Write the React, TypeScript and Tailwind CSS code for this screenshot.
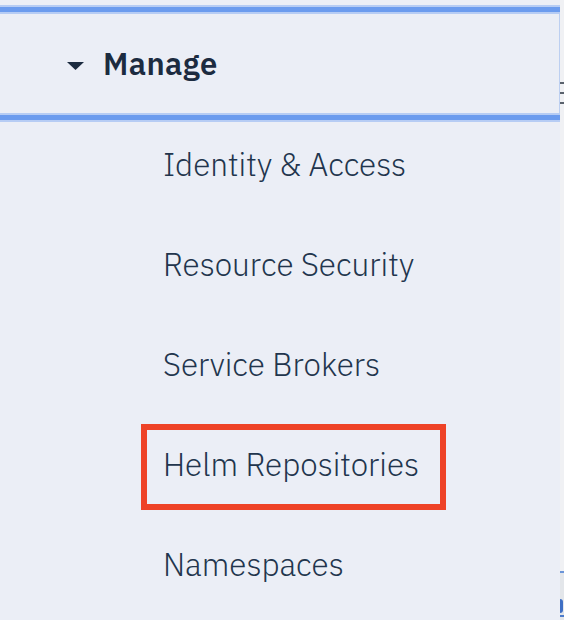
import React from "react";

const items = [
  "Identity & Access",
  "Resource Security",
  "Service Brokers",
  "Helm Repositories",
  "Namespaces",
];

function FocusBand() {
  return <div className="h-[9px] w-full shrink-0 border-y-2 border-[#b6ccf4] bg-[#6b9bee]" />;
}

export default function App() {
  return (
    <div
      className="relative flex h-[620px] w-[564px] overflow-hidden bg-[#ebeef6]"
      style={{ fontFamily: '"IBM Plex Sans", "Open Sans", "Noto Sans", sans-serif' }}
    >
      {/* Nav panel */}
      <div className="flex w-[560px] flex-col">
        <div className="h-[5px] shrink-0" />
        <FocusBand />
        <div className="flex h-[99px] shrink-0 items-center border-r border-[#bccff1] pl-[67px] pt-[2px]">
          <svg width="17" height="8" viewBox="0 0 17 8" className="mr-[19px] mt-[2px]">
            <path d="M0 0 H17 L8.5 8 Z" fill="#1c2b40" />
          </svg>
          <span className="text-[31px] font-semibold tracking-[0.4px] text-[#1c2b40]">Manage</span>
        </div>
        <FocusBand />
        <ul className="-mt-[7px] flex flex-col">
          {items.map((item) => (
            <li
              key={item}
              className="flex h-[100px] shrink-0 items-center pl-[163px] text-[31.5px] font-light text-[#22354d]"
            >
              {item}
            </li>
          ))}
        </ul>
      </div>

      {/* Neighbouring content, cut off at the right edge */}
      <div className="relative flex w-[4px] flex-col bg-[#f0f1f4]">
        <div className="absolute left-0 top-[82px] flex flex-col gap-[8px]">
          <span className="block h-[2px] w-[4px] bg-[#5a626c]" />
          <span className="block h-[2px] w-[4px] bg-[#5a626c]" />
          <span className="block h-[2px] w-[4px] bg-[#5a626c]" />
        </div>
        <div className="absolute left-0 top-[571px] h-[49px] w-[4px] bg-[#e3e6ea]">
          <div className="h-[2px] bg-[#6b95d8]" />
          <div className="mt-[26px] h-[14px] w-[3px] rounded-r-full bg-[#3f6fc4]" />
          <div className="mt-[2px] h-[2px] bg-[#4e7dcc]" />
        </div>
      </div>

      {/* Annotation box */}
      <div className="pointer-events-none absolute left-[141px] top-[424px] h-[86px] w-[305px] border-[6px] border-[#ee4227]" />
    </div>
  );
}
